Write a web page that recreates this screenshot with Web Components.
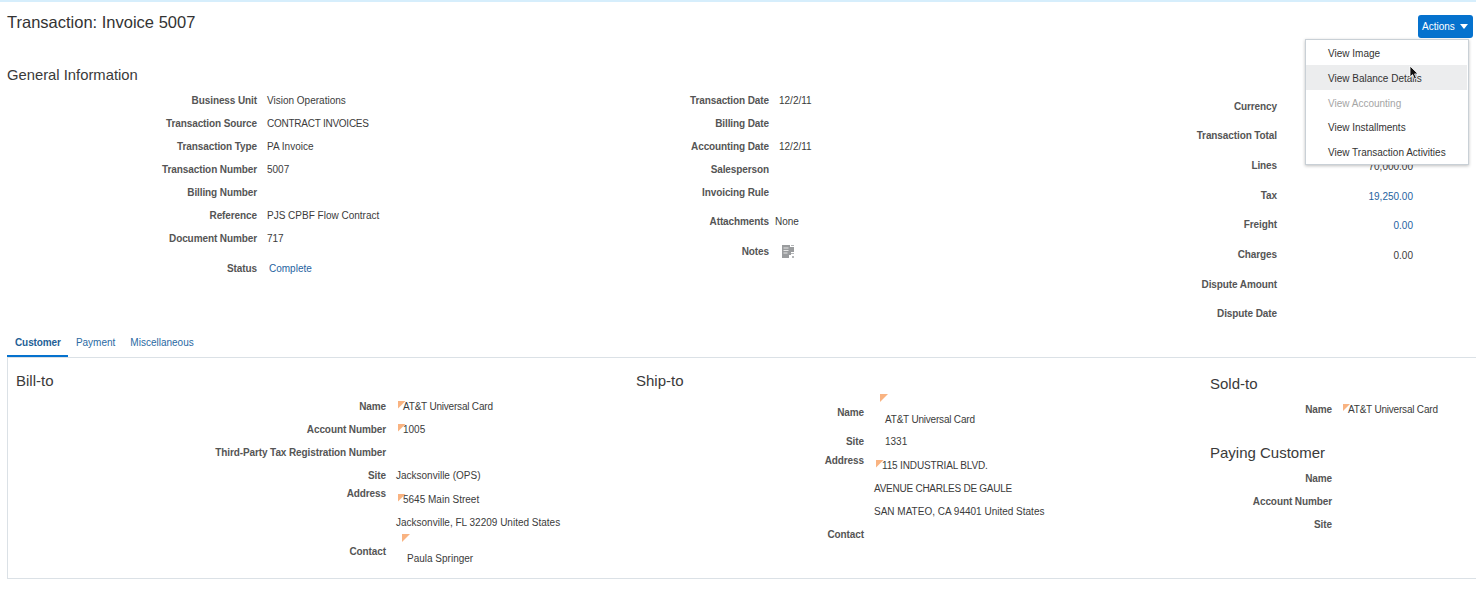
<!DOCTYPE html>
<html>
<head>
<meta charset="utf-8">
<title>Transaction: Invoice 5007</title>
<style>
  html, body { margin: 0; background: #fff; }
  body { font-family: "Liberation Sans", Arial, sans-serif; color: #333; width: 1476px; height: 599px; overflow: hidden; }
</style>
</head>
<body>
<invoice-page></invoice-page>

<script>
function shadow(el, html) {
    el.attachShadow({ mode: 'open' }).innerHTML = html;
}

class SectionTitle extends HTMLElement {
    constructor() {
        super();
        shadow(this, `
        <style>
          :host { display: block; font-size: var(--title-size, 15px); line-height: 22px; color: #3a3a3a; }
        </style>
        <slot></slot>`);
    }
}

class ActionMenu extends HTMLElement {
    constructor() {
        super();
        shadow(this, `
        <style>
          :host { display: block; position: absolute; left: 1305px; top: 37px; width: 164px; height: 126px; box-sizing: border-box;
                  background: #fff; border: 1px solid #c9d0d6; box-shadow: 0 1px 3px rgba(0,0,0,.25); z-index: 5; }
          .item { box-sizing: border-box; height: 24.8px; line-height: 21.8px; padding: 3px 0 0 22px; margin: 0 1px 0 0; font-size: 10px; color: #333; white-space: nowrap; }
          .hover { background: #ecedee; }
          .off { color: #a5a5a5; }
        </style>
        <div class="item">View Image</div>
        <div class="item hover">View Balance Details</div>
        <div class="item off">View Accounting</div>
        <div class="item">View Installments</div>
        <div class="item">View Transaction Activities</div>`);
    }
}

class ActionsButton extends HTMLElement {
    constructor() {
        super();
        shadow(this, `
        <style>
          :host { display: flex; align-items: center; gap: 5px; box-sizing: border-box; width: 55px; height: 23px; padding-left: 4px;
                  background: #0572ce; border-radius: 3px; color: #fff; font-size: 10px; }
          svg { display: block; }
        </style>
        <slot></slot>
        <svg width="8" height="5" viewBox="0 0 8 5"><path d="M0 0h8L4 5z" fill="#fff"/></svg>`);
    }
}

class FieldRow extends HTMLElement {
    constructor() {
        super();
        const label = this.getAttribute('label') || '';
        shadow(this, `
        <style>
          :host { display: flex; align-items: flex-start; min-height: var(--row-h, 23px); font-size: 10px; }
          .label { flex: none; box-sizing: border-box; width: var(--label-w, 257px); margin-top: var(--label-top, 0); text-align: right;
                   letter-spacing: -.1px; line-height: var(--row-h, 23px); font-weight: bold; color: #555; white-space: nowrap; }
          .value { flex: var(--value-flex, 1 1 auto); width: var(--value-w, auto); padding-left: var(--value-left, 10px); line-height: var(--row-h, 23px); color: #3b3b3b; white-space: nowrap; text-align: var(--value-align, left); }
          ::slotted(a) { color: #1f639f; text-decoration: none; }
          ::slotted(.tight) { letter-spacing: -.25px; }
        </style>
        <div class="label">${label}</div>
        <div class="value"><slot></slot></div>`);
    }
}

// orange corner marker that sits in front of a value
class FlagValue extends HTMLElement {
    constructor() {
        super();
        shadow(this, `
        <style>
          :host { display: block; position: relative; padding-left: var(--flag-text, 7px); }
          i { position: absolute; left: var(--flag-left, 1.5px); top: 6px; width: 8px; height: 8px; background: #f9b381;
              clip-path: polygon(0 0, 100% 0, 0 100%); }
        </style>
        <i></i><slot></slot>`);
    }
}

// marker on its own line, the value comes lower and further in
class FlagBlock extends HTMLElement {
    constructor() {
        super();
        shadow(this, `
        <style>
          :host { display: block; }
          i { display: block; width: 8px; height: 8px; margin: 0 0 var(--flag-gap, 5px) 6px; background: #f9b381;
              clip-path: polygon(0 0, 100% 0, 0 100%); }
          div { padding-left: 11px; }
        </style>
        <i></i><div><slot></slot></div>`);
    }
}

class NotesIcon extends HTMLElement {
    constructor() {
        super();
        shadow(this, `
        <style>:host { display: block; margin-top: 5px; } svg { display: block; }</style>
        <svg width="12" height="13" viewBox="0 0 12 13">
          <path d="M0 0h8v2h4v5H9v3H7v3H0z" fill="#9a9c9e"/>
          <path d="M1.5 3h5M1.5 5.5h5M1.5 8h4" stroke="#e6e6e6" stroke-width="1"/>
          <path d="M9 0h3v1H9zM9 8h3v1H9zM10 11h2v2h-2z" fill="#b4b6b8"/>
        </svg>`);
    }
}

class InfoColumn extends HTMLElement {
    constructor() {
        super();
        shadow(this, `
        <style>:host { display: block; flex: none; }</style>
        <slot></slot>`);
    }
}

class TabBar extends HTMLElement {
    constructor() {
        super();
        shadow(this, `
        <style>
          :host { display: flex; height: 26px; margin-left: 7px; border-bottom: 1px solid #dbe1e6; font-size: 10px; color: #2a6aa3; }
          div { padding: 0 7px 0 8px; line-height: 24px; height: 24px; }
          .on { font-weight: bold; letter-spacing: -.1px; color: #1f5f96; border-bottom: 2px solid #0572ce; }
        </style>
        <div class="on">Customer</div>
        <div>Payment</div>
        <div>Miscellaneous</div>`);
    }
}

class InvoicePage extends HTMLElement {
    constructor() {
        super();
        shadow(this, `
        <style>
          :host { display: block; position: relative; height: 599px; border-top: 2px solid #d6eefc; box-sizing: border-box; }
          header { display: flex; justify-content: space-between; height: 62px; padding: 13px 3px 0 7px; box-sizing: border-box; }
          h1 { margin: -4px 0 0; font-size: 16.5px; line-height: 22px; font-weight: normal; color: #333; }
          .general { margin-left: 7px; --title-size: 14.8px; }
          .info { display: flex; height: 245px; }
          .c1 { width: 512px; --label-w: 257px; --row-h: 23.1px; padding-top: 2.5px; }
          .c2 { width: 512px; --label-w: 257px; --row-h: 23.1px; padding-top: 2.5px; }
          .c3 { width: 452px; --label-w: 253px; --row-h: 29.7px; --label-top: -1px; --value-w: 136px; --value-flex: none; --value-left: 0; --value-align: right; padding-top: 6.5px; }
          .panel { display: flex; height: 221px; margin-left: 7px; box-sizing: border-box; border-left: 1px solid #dbe1e6; border-bottom: 1px solid #dbe1e6; }
          .bill { width: 628px; padding: 12px 0 0 8px; box-sizing: border-box; --label-w: 370px; }
          .ship { width: 574px; padding-top: 12px; --label-w: 228px; }
          .sold { width: 266px; padding-top: 15px; --label-w: 122px; }
          .rows { padding-top: 3px; }
        </style>
        <header>
          <h1>Transaction: Invoice 5007</h1>
          <actions-button>Actions</actions-button>
        </header>
        <action-menu></action-menu>
        <section-title class="general">General Information</section-title>
        <div class="info">
          <info-column class="c1">
            <field-row label="Business Unit">Vision Operations</field-row>
            <field-row label="Transaction Source"><span class="tight">CONTRACT INVOICES</span></field-row>
            <field-row label="Transaction Type">PA Invoice</field-row>
            <field-row label="Transaction Number">5007</field-row>
            <field-row label="Billing Number"></field-row>
            <field-row label="Reference">PJS CPBF Flow Contract</field-row>
            <field-row label="Document Number">717</field-row>
            <field-row label="Status" style="margin-top:7px;--value-left:12px"><a>Complete</a></field-row>
          </info-column>
          <info-column class="c2">
            <field-row label="Transaction Date">12/2/11</field-row>
            <field-row label="Billing Date"></field-row>
            <field-row label="Accounting Date">12/2/11</field-row>
            <field-row label="Salesperson"></field-row>
            <field-row label="Invoicing Rule"></field-row>
            <field-row label="Attachments" style="margin-top:6.5px;--value-left:6px">None</field-row>
            <field-row label="Notes" style="margin-top:6.5px;--value-left:13px"><notes-icon></notes-icon></field-row>
          </info-column>
          <info-column class="c3">
            <field-row label="Currency"></field-row>
            <field-row label="Transaction Total"></field-row>
            <field-row label="Lines">70,000.00</field-row>
            <field-row label="Tax"><a>19,250.00</a></field-row>
            <field-row label="Freight"><a>0.00</a></field-row>
            <field-row label="Charges">0.00</field-row>
            <field-row label="Dispute Amount"></field-row>
            <field-row label="Dispute Date"></field-row>
          </info-column>
        </div>
        <tab-bar></tab-bar>
        <div class="panel">
          <info-column class="bill">
            <section-title>Bill-to</section-title>
            <div class="rows">
              <field-row label="Name"><flag-value><span style="letter-spacing:-.2px">AT&amp;T Universal Card</span></flag-value></field-row>
              <field-row label="Account Number"><flag-value>1005</flag-value></field-row>
              <field-row label="Third-Party Tax Registration Number"></field-row>
              <field-row label="Site">Jacksonville (OPS)</field-row>
              <field-row label="Address" style="--label-top:-6px;margin-top:1px">
                <flag-value>5645 Main Street</flag-value>
                Jacksonville, FL 32209 United States
              </field-row>
              <field-row label="Contact" style="--label-top:6px"><flag-block>Paula Springer</flag-block></field-row>
            </div>
          </info-column>
          <info-column class="ship">
            <section-title>Ship-to</section-title>
            <div class="rows" style="padding-top:2px">
              <field-row label="Name" style="--label-top:7px"><flag-block style="--flag-gap:6px"><span style="letter-spacing:-.2px">AT&amp;T Universal Card</span></flag-block></field-row>
              <field-row label="Site" style="--value-left:21px;margin:-1px 0 1px">1331</field-row>
              <field-row label="Address" style="--label-top:-5.5px">
                <flag-value style="--flag-text:8px"><span style="letter-spacing:-.15px">115 INDUSTRIAL BLVD.</span></flag-value>
                <span style="letter-spacing:-.25px">AVENUE CHARLES DE GAULE</span><br>
                SAN MATEO, CA 94401 United States
              </field-row>
              <field-row label="Contact"></field-row>
            </div>
          </info-column>
          <info-column class="sold">
            <section-title>Sold-to</section-title>
            <field-row label="Name" style="margin-top:2.5px;--value-left:9px"><flag-value><span style="letter-spacing:-.2px">AT&amp;T Universal Card</span></flag-value></field-row>
            <section-title style="margin-top:21.5px">Paying Customer</section-title>
            <div class="rows">
              <field-row label="Name"></field-row>
              <field-row label="Account Number"></field-row>
              <field-row label="Site"></field-row>
            </div>
          </info-column>
        </div>
        <svg style="position:absolute;left:1409px;top:63px;z-index:6" width="11" height="15" viewBox="0 0 11 15">
          <path d="M1 1v11l2.6-2.4L5.4 14l2-.9L5.6 8.9H9z" fill="#111" stroke="#fff" stroke-width=".8"/>
        </svg>`);
    }
}

customElements.define('section-title', SectionTitle);
customElements.define('action-menu', ActionMenu);
customElements.define('actions-button', ActionsButton);
customElements.define('field-row', FieldRow);
customElements.define('flag-value', FlagValue);
customElements.define('flag-block', FlagBlock);
customElements.define('notes-icon', NotesIcon);
customElements.define('info-column', InfoColumn);
customElements.define('tab-bar', TabBar);
customElements.define('invoice-page', InvoicePage);
</script>
</body>
</html>
